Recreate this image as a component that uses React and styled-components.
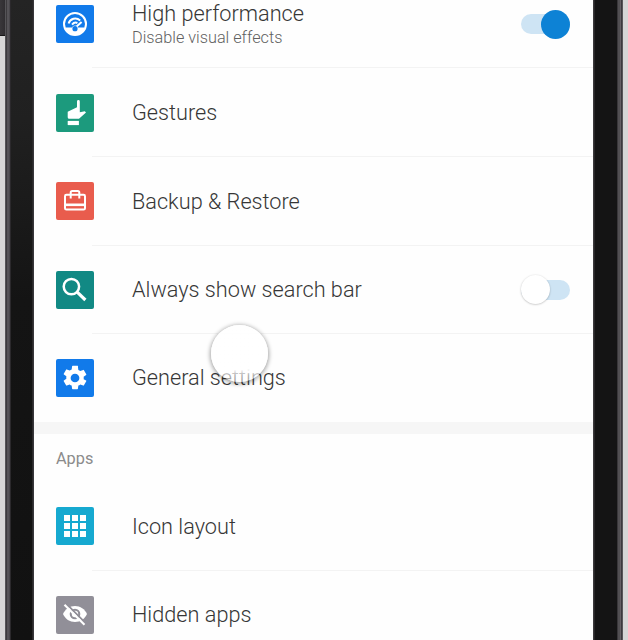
import React from "react";
import styled, { createGlobalStyle } from "styled-components";

const GlobalStyle = createGlobalStyle`
  * { box-sizing: border-box; }
  body { margin: 0; overflow: hidden; background: #d6d6d6; }
`;

const Stage = styled.main`
  position: relative;
  display: grid;
  grid-template-columns: 5px 29px 559px 30px 5px;
  width: 628px;
  height: 640px;
  overflow: hidden;
  font-family: Roboto, "Liberation Sans", sans-serif;
`;

const Outside = styled.div`
  background: #d6d6d6;
`;

const SideButton = styled.div`
  height: 36px;
  background: linear-gradient(90deg, #39373a, #302e31);
  border-bottom: 1px solid #171717;
`;

const LeftBezel = styled.div`
  background:
    linear-gradient(90deg, #555457 0 1px, #3c3a3d 1px 2px, #555357 2px 4px, #49474b 4px 5px, #2b292c 5px 6px, transparent 6px 27px, #292829 27px 28px, #37363a 28px),
    linear-gradient(180deg, #242424 0, #202020 120px, #141414 300px, #111 640px);
`;

const RightBezel = styled.div`
  background: linear-gradient(90deg, #3b393b 0 1px, #272628 1px 2px, #141414 2px 24px, #39373a 24px 25px, #514f52 25px 27px, #656065 27px 28px, #3c3a3e 28px 29px, #59575a 29px);
`;

const Screen = styled.section`
  height: 640px;
  overflow: hidden;
  background: #fefefe;
`;

const SettingsList = styled.div`
  margin-top: ${({ $offset }) => $offset || 0}px;
`;

const Row = styled.div`
  display: grid;
  grid-template-columns: 38px 1fr 50px;
  column-gap: 38px;
  align-items: center;
  height: ${({ $last }) => ($last ? 87.6 : 88.6)}px;
  padding: 0 22px;
  background: ${({ $last }) =>
    $last ? "none" : "linear-gradient(#f3f3f3, #f3f3f3) 58px 100% / 501px 1px no-repeat"};
`;

const IconTile = styled.div`
  display: grid;
  place-items: center;
  width: 38px;
  height: 38px;
  border-radius: 2px;
  background: ${({ $color }) => $color};
  svg { display: block; width: 28px; height: 28px; }
`;

const Copy = styled.div`
  display: flex;
  flex-direction: column;
  padding-top: 0.6px;
  white-space: nowrap;
`;

const Title = styled.div`
  color: #363636;
  font-size: 21.7px;
  font-weight: 300;
  line-height: 26px;
`;

const Subtitle = styled.div`
  color: #616161;
  font-size: 16.25px;
  font-weight: 300;
  line-height: 20px;
  margin-top: 1.6px;
`;

const Switch = styled.div`
  display: flex;
  align-items: center;
  justify-content: ${({ $on }) => ($on ? "flex-end" : "flex-start")};
  width: 49px;
  height: 20px;
  border-radius: 10px;
  background: #cee4f4;
`;

const Knob = styled.div`
  flex: none;
  width: 29px;
  height: 29px;
  border-radius: 50%;
  background: ${({ $on }) => ($on ? "#0d82d5" : "#fff")};
  box-shadow: ${({ $on }) => ($on ? "none" : "0 0.5px 2px rgba(0,0,0,.28)")};
`;

const Band = styled.div`
  height: 12.4px;
  background: #f6f6f6;
`;

const SectionTitle = styled.h2`
  display: flex;
  align-items: center;
  height: 48px;
  margin: 0;
  padding: 0 0 0 22px;
  color: #8b8b8b;
  font-size: 16.3px;
  font-weight: 400;
`;

const TouchIndicator = styled.div`
  position: absolute;
  left: 211px;
  top: 325px;
  width: 57px;
  height: 57px;
  border-radius: 50%;
  background: linear-gradient(rgba(255,255,255,.95) 0 45px, rgba(255,255,255,.6) 50px, rgba(255,255,255,.5) 56px);
  box-shadow: 0 1px 4px 1px rgba(0,0,0,.36), inset 0 0 2px rgba(255,255,255,.7);
`;

const GaugeIcon = () => (
  <svg viewBox="0 0 28 28" fill="none">
    <circle cx="14" cy="14" r="11" stroke="#fff" strokeWidth="2" />
    <path d="M4 17.5h7a3.2 3.2 0 0 1 6 0h7C22.7 22 18.8 25 14 25S5.3 22 4 17.5Z" fill="#fff" />
    <path d="M7.6 13.5C9 8.4 15.2 7 19.2 10.4M11 14.6c1.6-1.9 3.6-2.4 5.4-1.6M14.8 17.2l5.8-5.2" stroke="#fff" strokeWidth="2" />
    <circle cx="14" cy="18.7" r="2.6" fill="#117aea" />
  </svg>
);

const HandIcon = () => (
  <svg viewBox="0 0 28 28" fill="#fff">
    <path d="M6.7 12.8 16 8.2V2.4q0-1.4 1.4-1.4t1.4 1.4v10.8l5-1 1.2 1.4-7 6.2H8.2q-1.5 0-1.5-1.5Z" />
    <path d="M6.7 21.9h11.2v4.2H6.7Z" />
  </svg>
);

const BackupIcon = () => (
  <svg viewBox="0 0 28 28" fill="none" stroke="#fff" strokeWidth="2">
    <rect x="4" y="7.8" width="20" height="14.8" rx="1.4" />
    <path d="M9.7 11.6V5.4q0-1.5 1.5-1.5h5.6q1.5 0 1.5 1.5v6.2" />
    <path d="M4 17.8h20" strokeWidth="2.6" />
  </svg>
);

const SearchIcon = () => (
  <svg viewBox="0 0 28 28" fill="none" stroke="#fff">
    <circle cx="10.4" cy="10.6" r="7.7" strokeWidth="2.5" />
    <path d="m16.2 16.2 8.2 7.8" strokeWidth="3.2" />
  </svg>
);

const GearIcon = () => (
  <svg viewBox="0 0 24 24" fill="#fff">
    <path transform="translate(12 12) scale(1.04) translate(-12 -12)" d="M19.14 12.94c.04-.3.06-.61.06-.94s-.02-.64-.07-.94l2.03-1.58a.49.49 0 0 0 .12-.61l-1.92-3.32a.49.49 0 0 0-.59-.22l-2.39.96c-.5-.38-1.03-.7-1.62-.94l-.36-2.54A.48.48 0 0 0 13.92 2h-3.84a.47.47 0 0 0-.47.41l-.36 2.54c-.59.24-1.13.57-1.62.94l-2.39-.96a.48.48 0 0 0-.59.22L2.74 8.47a.47.47 0 0 0 .12.61l2.03 1.58c-.05.3-.09.63-.09.94s.02.64.07.94l-2.03 1.58a.49.49 0 0 0-.12.61l1.92 3.32c.12.22.37.29.59.22l2.39-.96c.5.38 1.03.7 1.62.94l.36 2.54c.05.24.24.41.48.41h3.84c.24 0 .44-.17.47-.41l.36-2.54c.59-.24 1.13-.56 1.62-.94l2.39.96c.22.08.47 0 .59-.22l1.92-3.32a.47.47 0 0 0-.12-.61ZM12 15.6a3.6 3.6 0 1 1 0-7.2 3.6 3.6 0 0 1 0 7.2Z" />
  </svg>
);

const GridIcon = () => (
  <svg viewBox="0 0 28 28" fill="#fff">
    {[3, 11, 19].map((y) => [3, 11, 19].map((x) => (
      <rect key={`${x}-${y}`} x={x} y={y} width="6" height="6" />
    )))}
  </svg>
);

const HiddenIcon = () => (
  <svg viewBox="0 0 28 28" fill="none">
    <path d="M2 13C4.2 8 8.7 5 14 5s9.8 3 12 8c-2.2 5-6.7 8-12 8S4.2 18 2 13Z" fill="#fff" />
    <circle cx="14" cy="13" r="5.3" fill="#918f98" />
    <circle cx="14" cy="13" r="3.2" fill="#fff" />
    <path d="m5.6 3.1 20 20" stroke="#918f98" strokeWidth="2" />
    <path d="m3.5 3.7 20 20" stroke="#fff" strokeWidth="2.2" />
  </svg>
);

const general = [
  { title: "High performance", subtitle: "Disable visual effects", color: "#117aea", Icon: GaugeIcon, toggle: true },
  { title: "Gestures", color: "#1c9a7d", Icon: HandIcon },
  { title: "Backup & Restore", color: "#e95c4d", Icon: BackupIcon },
  { title: "Always show search bar", color: "#118984", Icon: SearchIcon, toggle: false },
  { title: "General settings", color: "#117aea", Icon: GearIcon },
];

const apps = [
  { title: "Icon layout", color: "#16a9d0", Icon: GridIcon },
  { title: "Hidden apps", color: "#918f98", Icon: HiddenIcon },
];

function SettingRow({ item, last }) {
  const { title, subtitle, color, Icon, toggle } = item;
  return (
    <Row $last={last}>
      <IconTile $color={color}><Icon /></IconTile>
      <Copy>
        <Title>{title}</Title>
        {subtitle && <Subtitle>{subtitle}</Subtitle>}
      </Copy>
      {toggle !== undefined && (
        <Switch $on={toggle} role="switch" aria-checked={toggle}>
          <Knob $on={toggle} />
        </Switch>
      )}
    </Row>
  );
}

export default function App() {
  return (
    <>
      <GlobalStyle />
      <Stage>
        <Outside><SideButton /></Outside>
        <LeftBezel />
        <Screen>
          <SettingsList $offset={-20.2}>
            {general.map((item, index) => (
              <SettingRow key={item.title} item={item} last={index === general.length - 1} />
            ))}
          </SettingsList>
          <Band />
          <SectionTitle>Apps</SectionTitle>
          <SettingsList>
            {apps.map((item) => <SettingRow key={item.title} item={item} />)}
          </SettingsList>
        </Screen>
        <RightBezel />
        <Outside />
        <TouchIndicator />
      </Stage>
    </>
  );
}
